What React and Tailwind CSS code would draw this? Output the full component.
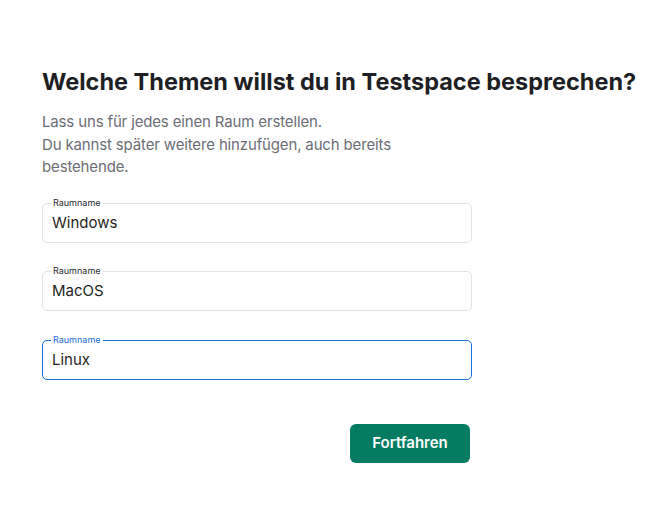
const rooms = [
  { name: 'Windows', focused: false },
  { name: 'MacOS', focused: false },
  { name: 'Linux', focused: true },
];

function RoomField({ name, focused }) {
  return (
    <div
      className={`relative h-10 rounded-[5px] border ${
        focused ? 'border-[#1a6ddb]' : 'border-[#e3e3e6]'
      }`}
    >
      <span
        className={`absolute -top-[6px] left-[8px] bg-white px-[2px] text-[9px] leading-[10px] ${
          focused ? 'text-[#1a6ddb]' : 'text-[#2b2b30]'
        }`}
      >
        Raumname
      </span>
      <div className="pl-[9px] pt-[10px] text-[15px] leading-[18px] text-[#1f1f23]">
        {name}
      </div>
    </div>
  );
}

export default function App() {
  return (
    <div
      className="min-h-screen bg-white pl-[42px] pt-[66px]"
      style={{ fontFamily: 'Inter, "Noto Sans", sans-serif' }}
    >
      <h1 className="whitespace-nowrap text-[23.5px] font-bold leading-[32px] text-[#1e1f24]">
        Welche Themen willst du in Testspace besprechen?
      </h1>

      <div className="w-[430px]">
        <p className="mt-[13px] text-[15px] leading-[22.5px] tracking-[-0.15px] text-[#6b6e76]">
          Lass uns für jedes einen Raum erstellen.
          <br />
          Du kannst später weitere hinzufügen, auch bereits bestehende.
        </p>

        <div className="mt-[24px] flex flex-col gap-[28.5px]">
          {rooms.map((room) => (
            <RoomField key={room.name} {...room} />
          ))}
        </div>

        <div className="mt-[44px] flex justify-end pr-[2px]">
          <button className="h-[39px] w-[120px] rounded-[6px] bg-[#037c61] text-[15px] font-semibold text-white">
            Fortfahren
          </button>
        </div>
      </div>
    </div>
  );
}
